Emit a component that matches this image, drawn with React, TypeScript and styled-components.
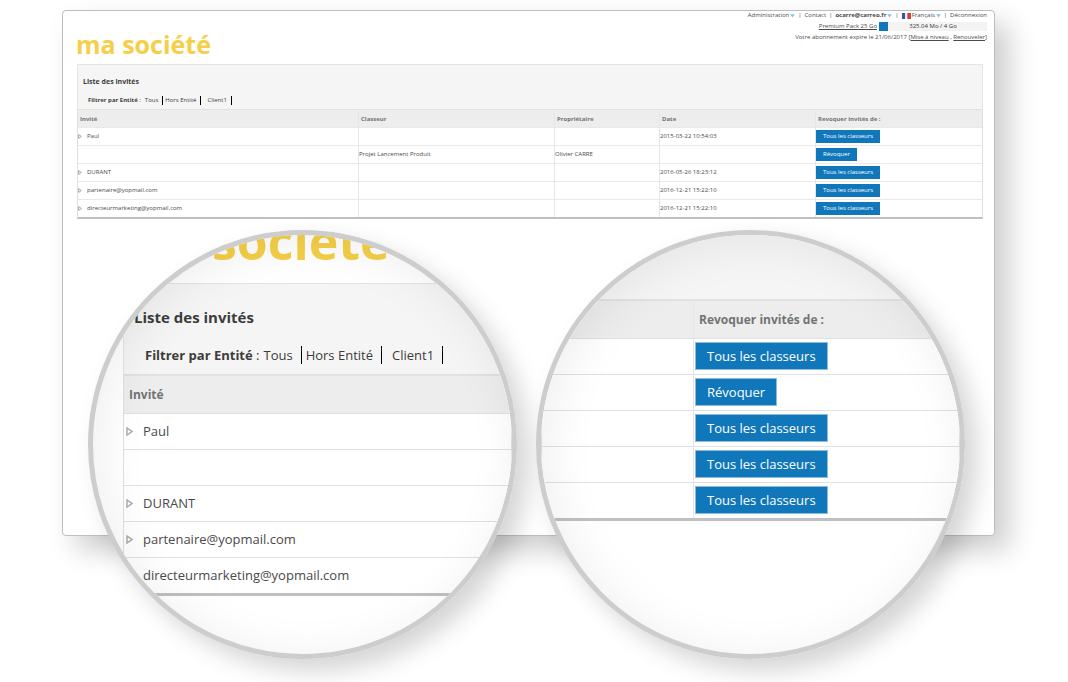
import React from 'react';
import styled, { createGlobalStyle, css } from 'styled-components';

const GlobalStyle = createGlobalStyle`
  *, *::before, *::after { box-sizing: border-box; }
  body {
    margin: 0;
    background: #fff;
    color: #4a4a4a;
    font-family: "Open Sans", "Noto Sans", sans-serif;
    overflow-x: hidden;
  }
`;

const Page = styled.main`
  padding: 10px 73px 23px 62px;
`;

const Card = styled.section`
  min-height: 526px;
  background: #fff;
  border: 1px solid #bdbdbd;
  border-radius: 4px;
  box-shadow: 14px 14px 28px rgba(0, 0, 0, 0.2);
`;

const Header = styled.header`
  display: flex;
  justify-content: space-between;
  min-height: 53px;
  padding: 0 7px 0 13px;
`;

const Brand = styled.h1`
  margin: 16px 0 0;
  color: #f5cf47;
  font-size: 25px;
  line-height: 34px;
  font-weight: 700;
`;

const Account = styled.div`
  display: flex;
  flex-direction: column;
  align-items: flex-end;
  font-size: 6px;
  line-height: 9px;
`;

const AccountRow = styled.nav<{ $gap: number }>`
  display: flex;
  align-items: center;
  height: 9px;
  gap: ${(p) => p.$gap}px;
  margin-bottom: 2px;
`;

const Item = styled.span`
  display: inline-flex;
  align-items: center;
  gap: 1px;
`;

const PlainLink = styled.a<{ $strong?: boolean }>`
  color: inherit;
  text-decoration: none;
  font-weight: ${(p) => (p.$strong ? 700 : 400)};
`;

const Underlined = styled.a`
  color: inherit;
  text-decoration: underline;
`;

const Quota = styled.div`
  display: flex;
  width: 108px;
  height: 9px;
  background: #f3f3f3;
`;

const QuotaUsed = styled.span`
  width: 9px;
  background: #1077bb;
`;

const QuotaText = styled.span`
  flex: 1;
  padding-right: 9px;
  text-align: center;
  color: #333;
`;

const Panel = styled.section<{ $big?: boolean }>`
  border: 1px solid #e4e4e4;
  border-bottom: 0;
  background: #f5f5f5;
  ${(p) =>
    p.$big
      ? css`
          padding: 21px 0 10px 10px;
        `
      : css`
          margin: 0 11px 0 14px;
          padding: 11px 0 4px 5px;
        `}
`;

const PanelTitle = styled.h2<{ $big?: boolean }>`
  margin: 0;
  color: #3c3c3c;
  font-weight: 700;
  font-size: ${(p) => (p.$big ? 15 : 7)}px;
  line-height: ${(p) => (p.$big ? 24 : 12)}px;
`;

const Filters = styled.div<{ $big?: boolean }>`
  display: flex;
  align-items: center;
  color: #3c3c3c;
  font-size: ${(p) => (p.$big ? 13 : 6)}px;
  line-height: ${(p) => (p.$big ? 18 : 9)}px;
  margin-top: ${(p) => (p.$big ? 17 : 8)}px;
  padding-left: ${(p) => (p.$big ? 11 : 5)}px;
`;

const FilterLabel = styled.span<{ $big?: boolean }>`
  margin-right: 4px;
`;

const Filter = styled(PlainLink)<{ $big?: boolean; $indent?: boolean }>`
  border-right: 1px solid #000;
  padding-right: ${(p) => (p.$big ? 8 : 4)}px;
  margin-right: ${(p) => (p.$big ? 4 : 2)}px;
  margin-left: ${(p) => (p.$indent ? (p.$big ? 6 : 4) : 0)}px;
`;

const TableWrap = styled.div`
  margin: 0 11px 0 14px;
`;

const Table = styled.table<{ $big?: boolean }>`
  width: 100%;
  table-layout: fixed;
  border-collapse: separate;
  border-spacing: 0;
  text-align: left;
  border: 1px solid #e0e0e0;
  border-top: 0;
  border-bottom: ${(p) => (p.$big ? 3 : 2)}px solid #c0c0c0;
  font-size: ${(p) => (p.$big ? 13 : 6)}px;
  background: #fff;
`;

const Th = styled.th<{ $big?: boolean }>`
  height: ${(p) => (p.$big ? 39 : 18)}px;
  padding: 0 0 0 ${(p) => (p.$big ? 5 : 2)}px;
  border-top: ${(p) => (p.$big ? 2 : 1)}px solid #e2e2e2;
  border-left: 1px solid #e6e6e6;
  background: #ededed;
  color: #737373;
  font-size: ${(p) => (p.$big ? 12 : 6)}px;
  line-height: ${(p) => (p.$big ? 16 : 8)}px;
  &:first-child { border-left: 0; }
`;

const Td = styled.td<{ $big?: boolean }>`
  height: ${(p) => (p.$big ? 36 : 18)}px;
  padding: 0 0 1px ${(p) => (p.$big ? 1 : 0)}px;
  border-top: 1px solid ${(p) => (p.$big ? '#e0e0e0' : '#e9e9e9')};
  border-left: 1px solid #e6e6e6;
  line-height: ${(p) => (p.$big ? 18 : 8)}px;
  &:first-child { border-left: 0; }
`;

const Guest = styled.div<{ $big?: boolean }>`
  display: flex;
  align-items: center;
  gap: ${(p) => (p.$big ? 10 : 5)}px;
  padding-left: ${(p) => (p.$big ? 1 : 0)}px;
`;

const ActionButton = styled.button<{ $big?: boolean }>`
  display: block;
  border: ${(p) => (p.$big ? '1px solid #8dbbdc' : '0')};
  padding: 0 ${(p) => (p.$big ? 11 : 7)}px;
  height: ${(p) => (p.$big ? 28 : 13)}px;
  background: #1077bb;
  color: #fff;
  font-family: inherit;
  font-size: inherit;
  line-height: inherit;
  cursor: pointer;
`;

const Lenses = styled.div`
  position: relative;
  display: flex;
  gap: 19px;
  margin: -306px 0 0 26px;
`;

const LensShadow = styled.div`
  border-radius: 50%;
  box-shadow: 12px 12px 24px rgba(0, 0, 0, 0.17);
`;

const Lens = styled.section`
  position: relative;
  width: 429px;
  height: 429px;
  border: 5px solid #cdcdcd;
  border-radius: 50%;
  overflow: hidden;
  background: #fff;
  &::after {
    content: '';
    position: absolute;
    inset: -1px;
    border-radius: 50%;
    box-shadow: inset 6px 6px 50px rgba(0, 0, 0, 0.07);
    pointer-events: none;
  }
`;

const LensBrand = styled.p`
  display: flex;
  align-items: flex-end;
  height: 48px;
  margin: 0;
  padding: 0 0 6px 119px;
  color: #f5cf47;
  font-size: 50px;
  font-weight: 700;
  line-height: 72px;
`;

const GuestLens = styled.div`
  padding-left: 30px;
`;

const PanelBand = styled.div`
  height: 64px;
  background: #f5f5f5;
`;

const Caret = () => (
  <svg width="5" height="4" viewBox="0 0 5 4" aria-hidden="true">
    <path d="M0.2 0.3h4.6L2.5 3.4z" fill="#7cc6e2" />
  </svg>
);

const Flag = () => (
  <svg width="9" height="6" viewBox="0 0 9 6" aria-hidden="true">
    <rect width="3" height="6" fill="#2f56a4" />
    <rect x="3" width="3" height="6" fill="#e9eef5" />
    <rect x="5.4" width="3.6" height="6" fill="#dd3b35" />
  </svg>
);

const Expander = ({ big }: { big?: boolean }) => (
  <svg width={big ? 7 : 4} height={big ? 9 : 5} viewBox="0 0 7 9" aria-hidden="true">
    <path d="M1 1v7l5-3.5z" fill="#fff" stroke="#a9a9a9" strokeWidth={big ? 1.4 : 1.8} />
  </svg>
);

type Entry = {
  guest?: string;
  binder?: string;
  owner?: string;
  date?: string;
  action: string;
};

const entries: Entry[] = [
  { guest: 'Paul', date: '2015-03-22 10:54:03', action: 'Tous les classeurs' },
  { binder: 'Projet Lancement Produit', owner: 'Olivier CARRE', action: 'Révoquer' },
  { guest: 'DURANT', date: '2016-05-26 18:23:12', action: 'Tous les classeurs' },
  { guest: 'partenaire@yopmail.com', date: '2016-12-21 15:22:10', action: 'Tous les classeurs' },
  { guest: 'directeurmarketing@yopmail.com', date: '2016-12-21 15:22:10', action: 'Tous les classeurs' },
];

const GuestName = ({ name, big }: { name?: string; big?: boolean }) =>
  name ? (
    <Guest $big={big}>
      <Expander big={big} />
      {name}
    </Guest>
  ) : null;

const PanelContent = ({ big }: { big?: boolean }) => (
  <Panel $big={big}>
    <PanelTitle $big={big}>Liste des invités</PanelTitle>
    <Filters $big={big}>
      <FilterLabel>
        <b>Filtrer par Entité</b> :
      </FilterLabel>
      <Filter href="#tous" $big={big}>Tous</Filter>
      <Filter href="#hors-entite" $big={big}>Hors Entité</Filter>
      <Filter href="#client1" $big={big} $indent>Client1</Filter>
    </Filters>
  </Panel>
);

export default function App() {
  return (
    <>
      <GlobalStyle />
      <Page>
        <Card>
          <Header>
            <Brand>ma société</Brand>
            <Account>
              <AccountRow $gap={3}>
                <Item><PlainLink href="#administration">Administration</PlainLink><Caret /></Item>
                <span>|</span>
                <PlainLink href="#contact">Contact</PlainLink>
                <span>|</span>
                <Item><PlainLink href="#compte" $strong>ocarre@carreo.fr</PlainLink><Caret /></Item>
                <span>|</span>
                <Item><Flag /><PlainLink href="#langue">Français</PlainLink><Caret /></Item>
                <span>|</span>
                <PlainLink href="#deconnexion">Déconnexion</PlainLink>
              </AccountRow>
              <AccountRow $gap={2}>
                <Underlined href="#pack">Premium Pack 25 Go</Underlined>
                <Quota>
                  <QuotaUsed />
                  <QuotaText>325.04 Mo / 4 Go</QuotaText>
                </Quota>
              </AccountRow>
              <div>
                Votre abonnement expire le 21/06/2017 [<Underlined href="#niveau">Mise à niveau</Underlined> ,{' '}
                <Underlined href="#renouveler">Renouveler</Underlined>]
              </div>
            </Account>
          </Header>
          <PanelContent />
          <TableWrap>
            <Table>
              <colgroup>
                <col width="280" />
                <col width="196" />
                <col width="105" />
                <col width="156" />
                <col />
              </colgroup>
              <thead>
                <tr>
                  <Th>Invité</Th>
                  <Th>Classeur</Th>
                  <Th>Propriétaire</Th>
                  <Th>Date</Th>
                  <Th>Revoquer invités de :</Th>
                </tr>
              </thead>
              <tbody>
                {entries.map((e, i) => (
                  <tr key={i}>
                    <Td><GuestName name={e.guest} /></Td>
                    <Td>{e.binder}</Td>
                    <Td>{e.owner}</Td>
                    <Td>{e.date}</Td>
                    <Td><ActionButton type="button">{e.action}</ActionButton></Td>
                  </tr>
                ))}
              </tbody>
            </Table>
          </TableWrap>
        </Card>
        <Lenses>
          <LensShadow>
            <Lens>
              <LensBrand>société</LensBrand>
              <GuestLens>
                <PanelContent big />
                <Table $big>
                  <thead>
                    <tr><Th $big>Invité</Th></tr>
                  </thead>
                  <tbody>
                    {entries.map((e, i) => (
                      <tr key={i}><Td $big><GuestName name={e.guest} big /></Td></tr>
                    ))}
                  </tbody>
                </Table>
              </GuestLens>
            </Lens>
          </LensShadow>
          <LensShadow>
            <Lens>
              <PanelBand />
              <Table $big>
                <colgroup>
                  <col width="151" />
                  <col />
                </colgroup>
                <thead>
                  <tr><Th $big /><Th $big>Revoquer invités de :</Th></tr>
                </thead>
                <tbody>
                  {entries.map((e, i) => (
                    <tr key={i}>
                      <Td $big />
                      <Td $big><ActionButton type="button" $big>{e.action}</ActionButton></Td>
                    </tr>
                  ))}
                </tbody>
              </Table>
            </Lens>
          </LensShadow>
        </Lenses>
      </Page>
    </>
  );
}
